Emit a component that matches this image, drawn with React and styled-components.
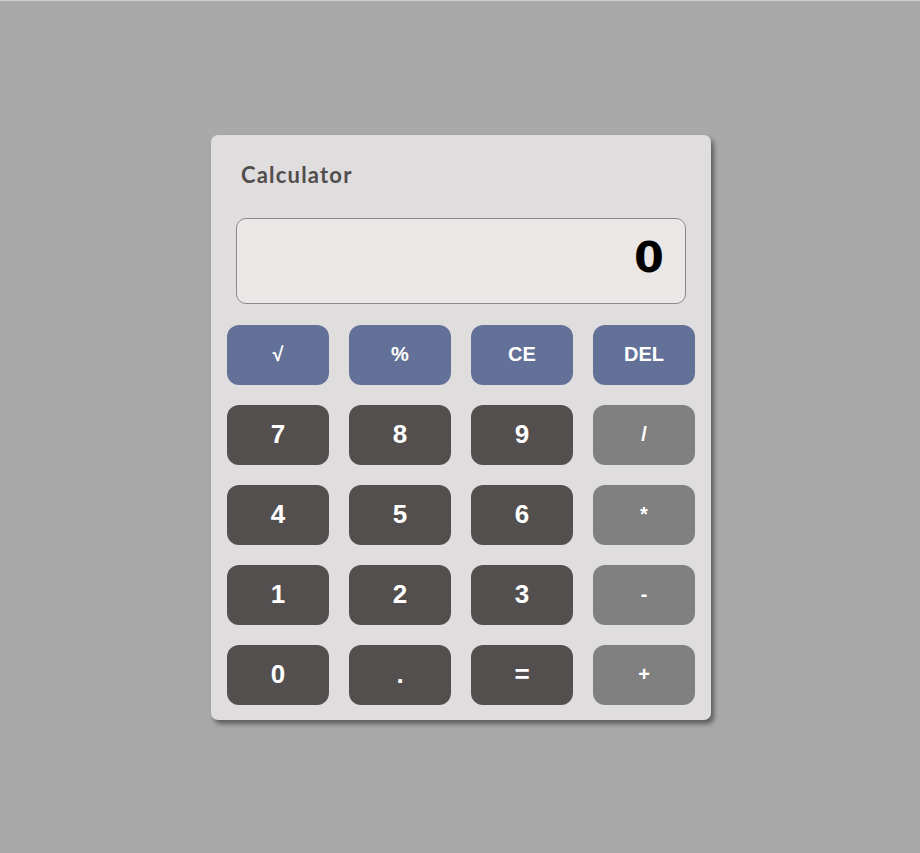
import styled, { createGlobalStyle } from "styled-components";

const GlobalStyle = createGlobalStyle`
  * {
    box-sizing: border-box;
  }
  body {
    margin: 0;
    background: #a9a9a9;
    border-top: 1px solid #cfcfcf;
    font-family: "Liberation Sans", Arial, sans-serif;
  }
`;

const Page = styled.div`
  min-height: calc(100vh - 1px);
  display: flex;
  align-items: center;
  justify-content: center;
  padding-left: 2px;
`;

const Card = styled.div`
  width: 500px;
  background: #dfdddd;
  border-radius: 7px;
  box-shadow: 3px 4px 5px rgba(0, 0, 0, 0.45);
  padding: 27px 16px 15px;
`;

const Title = styled.h2`
  margin: 0 0 30px 14px;
  font-family: "Lato", "Open Sans", sans-serif;
  font-size: 22px;
  line-height: 26px;
  font-weight: 700;
  color: #524d4d;
  letter-spacing: 1.2px;
`;

const Display = styled.div`
  height: 86px;
  margin: 0 9px 21px;
  border: 1px solid #8a8888;
  border-radius: 10px;
  background: #ebe7e6;
  display: flex;
  align-items: center;
  justify-content: flex-end;
  padding: 0 21px 8px;
  font-family: "DejaVu Sans", Verdana, sans-serif;
  font-weight: 700;
  font-size: 43px;
  color: #000;
`;

const Keys = styled.div`
  display: grid;
  grid-template-columns: repeat(4, 102px);
  grid-auto-rows: 60px;
  gap: 20px;
`;

const colors = {
  func: "#637097",
  digit: "#544f4f",
  op: "#808080",
};

const Key = styled.button`
  border: none;
  border-radius: 12px;
  background: ${(p) => colors[p.$kind]};
  color: #fff;
  font-family: "Liberation Sans", Arial, sans-serif;
  font-weight: 700;
  font-size: ${(p) => (p.$kind === "digit" ? "26px" : "20px")};
  cursor: pointer;
  padding: 0;
`;

const keys = [
  ["√", "func"],
  ["%", "func"],
  ["CE", "func"],
  ["DEL", "func"],
  ["7", "digit"],
  ["8", "digit"],
  ["9", "digit"],
  ["/", "op"],
  ["4", "digit"],
  ["5", "digit"],
  ["6", "digit"],
  ["*", "op"],
  ["1", "digit"],
  ["2", "digit"],
  ["3", "digit"],
  ["-", "op"],
  ["0", "digit"],
  [".", "digit"],
  ["=", "digit"],
  ["+", "op"],
];

const App = () => {
  return (
    <Page>
      <GlobalStyle />
      <Card>
        <Title>Calculator</Title>
        <Display>0</Display>
        <Keys>
          {keys.map(([label, kind]) => (
            <Key key={label} $kind={kind}>
              {label}
            </Key>
          ))}
        </Keys>
      </Card>
    </Page>
  );
};

export default App;
